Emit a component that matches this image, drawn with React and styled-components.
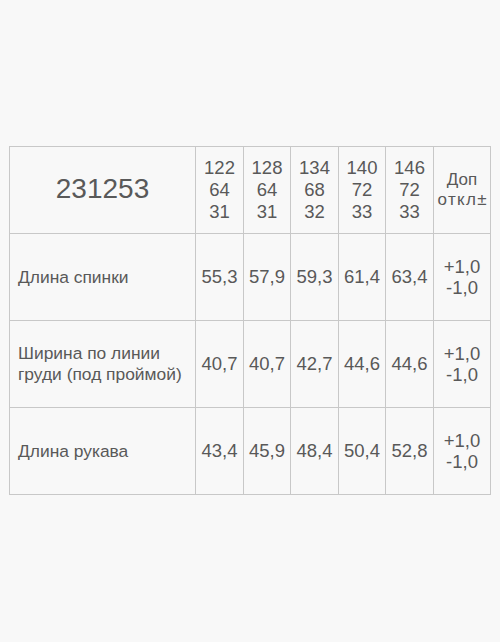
import React from 'react';
import styled, { createGlobalStyle } from 'styled-components';

const sizes = [
  ['122', '64', '31'],
  ['128', '64', '31'],
  ['134', '68', '32'],
  ['140', '72', '33'],
  ['146', '72', '33'],
];

const rows = [
  { label: ['Длина спинки'], values: ['55,3', '57,9', '59,3', '61,4', '63,4'], height: 87 },
  { label: ['Ширина по линии', 'груди (под проймой)'], values: ['40,7', '40,7', '42,7', '44,6', '44,6'], height: 87 },
  { label: ['Длина рукава'], values: ['43,4', '45,9', '48,4', '50,4', '52,8'], height: 87 },
];

const colWidths = [186, 48, 47, 48, 47, 48, 57];

const App = () => {
  return (
    <Page>
      <GlobalStyle />
      <Table>
        <colgroup>
          {colWidths.map((w, i) => (
            <col key={`col-${i}`} style={{ width: w }} />
          ))}
        </colgroup>
        <tbody>
          <Row $height={87}>
            <ArticleCell>231253</ArticleCell>
            {sizes.map((size, i) => (
              <Cell key={`size-${i}`}>
                <Stack>
                  {size.map((v, j) => (
                    <span key={j}>{v}</span>
                  ))}
                </Stack>
              </Cell>
            ))}
            <Cell>
              <Small>
                <span>Доп</span>
                <Spaced>откл±</Spaced>
              </Small>
            </Cell>
          </Row>
          {rows.map((row, i) => (
            <Row key={`row-${i}`} $height={row.height}>
              <LabelCell>
                {row.label.map((l, j) => (
                  <div key={j}>{l}</div>
                ))}
              </LabelCell>
              {row.values.map((v, j) => (
                <Cell key={`v-${j}`}>{v}</Cell>
              ))}
              <Cell>
                <Stack $lh={21}>
                  <span>+1,0</span>
                  <span>-1,0</span>
                </Stack>
              </Cell>
            </Row>
          ))}
        </tbody>
      </Table>
    </Page>
  );
};

export default App;

const GlobalStyle = createGlobalStyle`
  html, body {
    margin: 0;
    padding: 0;
    background: #f8f8f8;
  }
  body {
    font-family: "Liberation Sans", Arial, sans-serif;
    color: #595959;
  }
`;

const Page = styled.div`
  width: 500px;
  height: 642px;
  padding: 146px 0 0 9px;
  box-sizing: border-box;
`;

const Table = styled.table`
  border-collapse: collapse;
  table-layout: fixed;
  width: 481px;
  background: #f8f8f8;
`;

const Row = styled.tr`
  height: ${(p) => p.$height}px;
`;

const Cell = styled.td`
  border: 1px solid #c8c8c8;
  padding: 0;
  text-align: center;
  vertical-align: middle;
  font-size: 18.5px;
  color: #595959;
  white-space: nowrap;
`;

const ArticleCell = styled(Cell)`
  font-size: 28px;
  padding-bottom: 2px;
`;

const LabelCell = styled(Cell)`
  text-align: left;
  padding-left: 8px;
  font-size: 17.4px;
  line-height: 21px;
`;

const Stack = styled.div`
  display: flex;
  flex-direction: column;
  align-items: center;
  line-height: ${(p) => p.$lh || 22}px;
`;

const Small = styled.div`
  display: flex;
  flex-direction: column;
  align-items: center;
  font-size: 17px;
  line-height: 20px;
`;

const Spaced = styled.span`
  letter-spacing: 1.3px;
  margin-right: -1.3px;
`;
